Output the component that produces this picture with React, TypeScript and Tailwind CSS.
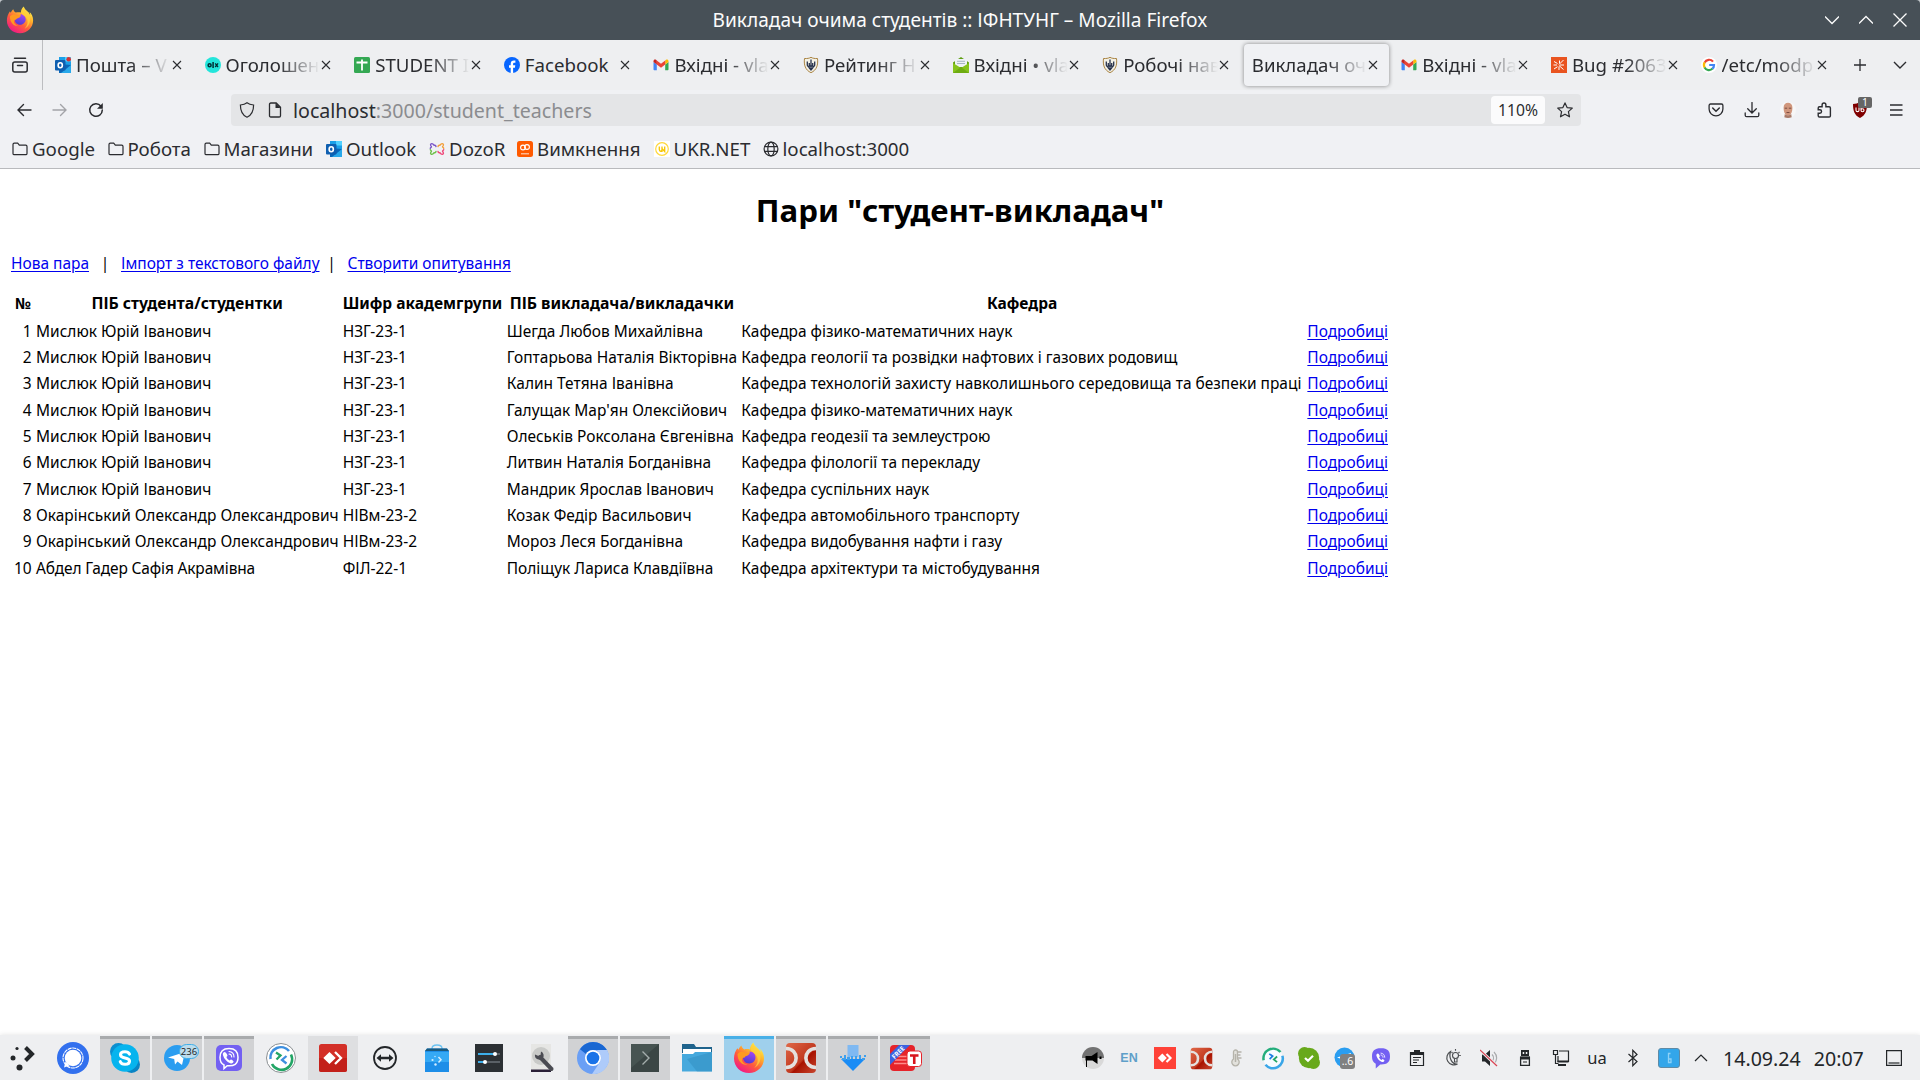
import React from "react";

type Kids = { children: React.ReactNode };

function Svg({ s = 16, vb = 16, c = "", children }: { s?: number; vb?: number; c?: string } & Kids) {
  return (
    <svg width={s} height={s} viewBox={`0 0 ${vb} ${vb}`} fill="none" className={`shrink-0 ${c}`}>
      {children}
    </svg>
  );
}

/* ---------- shared logos ---------- */

function Firefox({ s = 32 }: { s?: number }) {
  return (
    <Svg s={s} vb={32}>
      <defs>
        <linearGradient id="ffa" x1="26" y1="3" x2="7" y2="30" gradientUnits="userSpaceOnUse">
          <stop offset="0" stopColor="#fff44f" />
          <stop offset=".3" stopColor="#ffb22b" />
          <stop offset=".6" stopColor="#ff5c3c" />
          <stop offset="1" stopColor="#f0148c" />
        </linearGradient>
        <linearGradient id="ffb" x1="18" y1="9" x2="14" y2="22" gradientUnits="userSpaceOnUse">
          <stop offset="0" stopColor="#a646f5" />
          <stop offset="1" stopColor="#4a3ccf" />
        </linearGradient>
      </defs>
      <path fill="url(#ffa)" d="M20.300.500c-2 1.800-3.300 4.300-3.300 7-2-.6-4-.5-5.800 0C9.500 6.500 8.600 5 8.400 3.600 6.900 4.700 6 6.200 5.600 7.700L4.300 6.300C2.400 9 1 12.500 1 16.500 1 25 7.700 31 16 31s15-6.300 15-14.800c0-4-1.700-7.400-4.100-9.400.5 1.300.7 2.300.7 3.400C26.200 5.800 21.500 5 20.300.500z" />
      <path fill="url(#ffb)" d="M16.500 9.500c4 0 6 3 6 6s-2.700 6-6.200 6c-3.800 0-6.300-2.800-6.300-6 0-1 .3-2.500 1-3.300 1.500-.2 4-.2 5.500-1.200.5-.5.300-.9 0-1.500z" />
      <path fill="#ff9a20" d="M4.500 12c2.500-3 6-2.500 7.500-1.300 2 .4 3.300.1 4.800.3-.4 1.600-2 2.500-4.200 3.200-1 .5-.7 2-2.600 1.500-2.500 2.700.5 6.500 4.500 6.800-5 1.200-10-3-10-10.500z" />
      <path fill="#ffd23c" opacity=".75" d="M20.300 1.500c.5 4 6 5 7 11.500 1 6-2 11-6 13 2.500-3 4.200-6 3-10.500C23 11.500 18 10 17.500 7.300c0-2.300 1-4.300 2.800-5.800z" />
    </Svg>
  );
}

function Outlook({ dot = false }: { dot?: boolean }) {
  return (
    <Svg>
      <path fill="#1a9fe8" d="M4 0h12v8H4z" />
      <path fill="#50d0ff" d="M10 0h6v4.500h-6z" />
      <path fill="#0a66b8" d="M4 7l12 1v8H4z" />
      <path fill="#28a8ea" d="M16 8v8H6z" />
      <rect y="3" width="10.500" height="10.500" rx="1" fill="#0f5fb0" />
      <ellipse cx="5.250" cy="8.200" rx="2.100" ry="2.500" stroke="#fff" strokeWidth="1.600" />
      {dot && <circle cx="13.700" cy="2.300" r="2.300" fill="#d13438" />}
    </Svg>
  );
}

const Olx = () => (
  <Svg>
    <circle cx="8" cy="8" r="8" fill="#23e5db" />
    <circle cx="4.600" cy="8.200" r="1.500" stroke="#002f34" strokeWidth="1.500" />
    <path d="M8.100 5v6" stroke="#002f34" strokeWidth="1.500" />
    <path d="M10.200 6.400l2.800 3.600M13 6.400l-2.800 3.600" stroke="#002f34" strokeWidth="1.300" />
  </Svg>
);

const Sheets = () => (
  <Svg>
    <rect width="16" height="16" rx="1.500" fill="#34a853" />
    <path d="M2.500 5.500h11M8 2.500v11" stroke="#fff" strokeWidth="1.800" />
  </Svg>
);

const Facebook = () => (
  <Svg>
    <circle cx="8" cy="8" r="8" fill="#0866ff" />
    <path fill="#fff" d="M6.700 16v-5.300H5V8.300h1.700V7c0-2.500 1.100-3.600 3.300-3.600.5 0 1.100.1 1.400.2v2.100h-.9c-1 0-1.400.4-1.400 1.400v1.200h2.200l-.4 2.400H9.100V16z" />
  </Svg>
);

const Gmail = () => (
  <Svg>
    <path fill="#4285f4" d="M.5 5v7.300c0 .6.500 1 1 1h2.300V7.500z" />
    <path fill="#34a853" d="M12.200 13.300h2.300c.6 0 1-.4 1-1V5l-3.300 2.500z" />
    <path fill="#fbbc04" d="M12.200 3.500v4l3.300-2.500V4c0-1.300-1.500-2-2.500-1.200z" />
    <path fill="#ea4335" d="M3.800 7.500v-4L8 6.700l4.200-3.200v4L8 10.700z" />
    <path fill="#c5221f" d="M.5 4v1l3.300 2.500v-4L3 2.800C2 2 .5 2.700.5 4z" />
  </Svg>
);

const Crest = () => (
  <Svg>
    <path d="M1.500 1.500c2.500.2 5-.2 6.500-1.200 1.500 1 4 1.400 6.500 1.200.8 6.500-.8 11.500-6.500 14.200C2.300 13 .7 8 1.500 1.500z" fill="#f3f1e6" stroke="#a98342" />
    <path d="M4.300 4.500v3.500c0 1.500 1.500 1.500 2 3L8 13l1.700-2c.5-1.500 2-1.500 2-3V4.500M8 2.500V12M6.300 6v3h3.400V6" stroke="#27324c" strokeWidth="1.300" />
  </Svg>
);

const GreenMail = () => (
  <Svg>
    <path fill="#5f9e10" d="M0 5.500L8 0l8 5.500V15a1 1 0 0 1-1 1H1a1 1 0 0 1-1-1z" />
    <path fill="#eef2f6" d="M2 2h12v8H2z" />
    <path d="M4 4.300h8M4 6.500h8" stroke="#a9b6c4" />
    <path fill="#86c31c" d="M0 6l8 5 8-5v9a1 1 0 0 1-1 1H1a1 1 0 0 1-1-1z" />
    <path fill="#6eac12" d="M0 16l8-6 8 6z" />
  </Svg>
);

const Bug = () => (
  <Svg>
    <path fill="#e95420" d="M0 0h16v16H0z" />
    <path d="M3 4.500l3.500 2M2.500 8h3.500M3 12l3.500-2.300M12.500 3L8 7.500M8.500 3.500v3M8 8.500l4.500 4M8 9.500v3.500M9 8h4" stroke="#fff" strokeWidth="1" />
  </Svg>
);

const GoogleG = () => (
  <Svg>
    <circle cx="8" cy="8" r="8" fill="#fff" />
    <path d="M12 4.600A5 5 0 0 0 3.600 5.600" stroke="#ea4335" strokeWidth="2.200" />
    <path d="M3.700 5.400a5 5 0 0 0 0 5.200" stroke="#fbbc04" strokeWidth="2.200" />
    <path d="M3.600 10.400a5 5 0 0 0 8 1.200" stroke="#34a853" strokeWidth="2.200" />
    <path d="M11.400 11.800A5 5 0 0 0 13 8H8.200" stroke="#4285f4" strokeWidth="2.200" />
  </Svg>
);

const Folder = () => (
  <Svg>
    <path d="M1 3.500c0-.8.500-1.300 1.300-1.300h3.400l1.600 1.900h6.400c.8 0 1.300.5 1.300 1.300v7c0 .8-.5 1.300-1.300 1.300H2.300c-.8 0-1.300-.5-1.300-1.300z" stroke="#2b2c30" strokeWidth="1.200" />
  </Svg>
);

const Dozor = () => (
  <Svg>
    <g strokeWidth="1.400" strokeLinecap="round">
      <path d="M7 5.500C6.500 3 5 5.300 4.500 3.500 2.500 1.800 1 3 1.800 4.700 3.500 6 1.500 6.500 1.300 7.300" stroke="#7b57c8" />
      <path d="M9 5.500c.5-2.500 2-.2 2.500-2 2-1.700 3.500-.5 2.700 1.200-1.700 1.300.3 1.800.5 2.600" stroke="#f2a03d" />
      <path d="M7 10.500c-.5 2.500-2 .2-2.500 2-2 1.700-3.500.5-2.700-1.200C3.500 10 1.500 9.500 1.300 8.700" stroke="#6fc04a" />
      <path d="M9 10.500c.5 2.500 2 .2 2.500 2 2 1.700 3.500.5 2.700-1.200-1.700-1.300.3-1.800.5-2.600" stroke="#ef4a7b" />
    </g>
  </Svg>
);

const Orange = () => (
  <Svg>
    <rect width="16" height="16" rx="2.500" fill="#ff5a00" />
    <circle cx="6" cy="6.500" r="2.400" stroke="#fff" strokeWidth="1.100" />
    <circle cx="10" cy="6" r="2.400" stroke="#fff" strokeWidth="1.100" />
    <path d="M4 12.800h8" stroke="#ffd9c2" strokeWidth="1.100" />
  </Svg>
);

const UkrNet = () => (
  <Svg>
    <path fill="#fff" d="M0 0h16v16H0z" />
    <circle cx="8" cy="8" r="6.300" stroke="#ffd83b" strokeWidth="1.200" />
    <path d="M5.300 5.500v3c0 2.300 2.700 2.300 2.700 0v-3M8 11V7.500l2.700 3V5.500" stroke="#f7c600" strokeWidth="1.300" />
  </Svg>
);

const Globe = () => (
  <Svg>
    <g stroke="#2b2c30" strokeWidth="1.200">
      <circle cx="8" cy="8" r="6.900" />
      <ellipse cx="8" cy="8" rx="3.200" ry="6.900" />
      <path d="M1.500 5.700h13M1.500 10.300h13" />
    </g>
  </Svg>
);

/* ---------- browser chrome ---------- */

const CloseX = () => (
  <Svg s={10} vb={10}>
    <path d="M1 1l8 8M9 1L1 9" stroke="#2b2c30" strokeWidth="1.100" />
  </Svg>
);

const tabs: { icon?: React.ReactNode; t: string; active?: boolean; fits?: boolean }[] = [
  { icon: <Outlook dot />, t: "Пошта – V" },
  { icon: <Olx />, t: "Оголошен" },
  { icon: <Sheets />, t: "STUDENT I" },
  { icon: <Facebook />, t: "Facebook", fits: true },
  { icon: <Gmail />, t: "Вхідні - vla" },
  { icon: <Crest />, t: "Рейтинг Н" },
  { icon: <GreenMail />, t: "Вхідні • vla" },
  { icon: <Crest />, t: "Робочі нав" },
  { t: "Викладач оч", active: true },
  { icon: <Gmail />, t: "Вхідні - vla" },
  { icon: <Bug />, t: "Bug #2063" },
  { icon: <GoogleG />, t: "/etc/modp" },
];

function TabStrip() {
  return (
    <div className="flex h-[50px] bg-[#eeeff1] text-[#2b2c30]">
      <div className="flex w-[43px] items-center border-r border-[#bcbdc0] pl-3">
        <Svg>
          <rect x=".8" y="5" width="14.400" height="10" rx="2" stroke="#2b2c30" strokeWidth="1.500" />
          <path d="M2.500 1.200h11" stroke="#2b2c30" strokeWidth="1.500" strokeLinecap="round" />
          <path d="M5.500 8.500h5" stroke="#2b2c30" strokeWidth="1.500" strokeLinecap="round" />
        </Svg>
      </div>
      <div className="flex pl-[2px]">
        {tabs.map((tab, i) => (
          <div key={i} className="flex w-[149.600px] px-[2px] py-1">
            <div
              className={
                tab.active
                  ? "flex h-[42px] flex-1 min-w-0 items-center rounded bg-[#f0f1f4] pr-[11px] pl-2 shadow-[0_0_4px_rgba(0,0,0,0.45)]"
                  : "flex h-[42px] flex-1 min-w-0 items-center pr-[11px] pl-2"
              }
            >
              {tab.icon && <span className="mr-[5px]">{tab.icon}</span>}
              <span
                className={
                  tab.fits
                    ? "min-w-0 flex-1 overflow-hidden text-[18.670px] leading-7 whitespace-nowrap"
                    : "min-w-0 flex-1 overflow-hidden text-[18.670px] leading-7 whitespace-nowrap [mask-image:linear-gradient(to_left,transparent_1px,black_42px)]"
                }
              >
                {tab.t}
              </span>
              <CloseX />
            </div>
          </div>
        ))}
      </div>
      <div className="flex flex-1 items-center justify-between pr-[13px] pl-[13px]">
        <Svg s={14} vb={14}>
          <path d="M7 1v12M1 7h12" stroke="#2b2c30" strokeWidth="1.300" />
        </Svg>
        <Svg s={14} vb={14}>
          <path d="M1 4l6 6 6-6" stroke="#2b2c30" strokeWidth="1.400" />
        </Svg>
      </div>
    </div>
  );
}

function NavBar() {
  return (
    <div className="flex h-10 items-center text-[#2b2c30]">
      <div className="flex w-[231px] gap-5 pl-4">
        <Svg>
          <path d="M15 8H2M7.500 2.500L2 8l5.500 5.500" stroke="#2b2c30" strokeWidth="1.400" strokeLinecap="round" />
        </Svg>
        <Svg>
          <path d="M1 8h13M8.500 2.500L14 8l-5.500 5.500" stroke="#a3a4a8" strokeWidth="1.400" strokeLinecap="round" />
        </Svg>
        <Svg>
          <path d="M13 4.200A6.300 6.300 0 1 0 14.300 8" stroke="#2b2c30" strokeWidth="1.500" strokeLinecap="round" />
          <path d="M14.800 1v5.700H9z" fill="#2b2c30" />
        </Svg>
      </div>
      <div className="flex h-8 w-[1350px] items-center rounded bg-[#e4e5e7] pl-2">
        <Svg>
          <path d="M8 .8c1.500 1.200 4 2 6.600 2.200 0 5.500-1.400 10-6.600 12.200C2.800 13 1.400 8.500 1.400 3 4 2.800 6.500 2 8 .8z" stroke="#2b2c30" strokeWidth="1.200" />
        </Svg>
        <span className="ml-3">
          <Svg>
            <path d="M2.500 2.300c0-.8.500-1.300 1.300-1.300h5.400L13.500 5.300v8.400c0 .8-.5 1.300-1.300 1.300H3.800c-.8 0-1.300-.5-1.300-1.300z" stroke="#2b2c30" strokeWidth="1.300" />
            <path d="M8.500 1v5h5z" fill="#2b2c30" />
          </Svg>
        </span>
        <span className="ml-[10px] flex-1 pt-[2px] text-[19.600px] text-[#8b8c8f]">
          <span className="text-[#2b2c30]">localhost</span>:3000/student_teachers
        </span>
        <span className="flex h-7 w-[54px] items-center justify-center rounded bg-[#fbfbfc] pt-[2px] text-[15.700px]">110%</span>
        <span className="mr-2 ml-3">
          <Svg>
            <path d="M8 .9l2.100 4.700 5.200.5-3.900 3.500 1.100 5.200L8 12.200l-4.500 2.600 1.100-5.200L.7 6.100l5.200-.5z" stroke="#2b2c30" strokeWidth="1.200" strokeLinejoin="round" />
          </Svg>
        </span>
      </div>
      <div className="flex flex-1 items-center justify-end gap-5 pr-4">
        <Svg>
          <path d="M2.500 2h11c.8 0 1.400.5 1.400 1.400V7A6.900 6.900 0 0 1 1.100 7V3.400C1.100 2.500 1.700 2 2.500 2z" stroke="#2b2c30" strokeWidth="1.300" />
          <path d="M4.700 6L8 9.200 11.300 6" stroke="#2b2c30" strokeWidth="1.500" strokeLinecap="round" />
        </Svg>
        <Svg>
          <path d="M8 .5V11M3.700 6.800L8 11l4.300-4.200M1.200 11v2.200c0 1 .6 1.500 1.500 1.500h10.600c.9 0 1.500-.5 1.500-1.500V11" stroke="#2b2c30" strokeWidth="1.300" strokeLinecap="round" />
        </Svg>
        <Svg>
          <ellipse cx="8" cy="8" rx="8" ry="8" fill="#f7f7f7" />
          <path d="M3.600 5.500C3.600 2.500 5.500.8 8 .8s4.400 1.700 4.400 4.700c0 4-1.200 8-4.400 8s-4.400-4-4.400-8z" fill="#d0967c" />
          <path d="M4.800 12c1.500 1.800 4.900 1.800 6.400 0l.5 3.200c-2 1-5.400 1-7.400 0z" fill="#a87a68" />
          <path d="M4.700 6.200h2.500M8.800 6.200h2.500M6.500 10.500h3" stroke="#7c4d40" strokeWidth="1" />
        </Svg>
        <Svg>
          <path d="M3.500 15c-.8 0-1.300-.5-1.300-1.300v-2.500h1.600a1.700 1.700 0 0 0 0-3.500H2.200V5.900c0-.8.500-1.200 1.300-1.200h2.600V2.900a1.900 1.900 0 0 1 3.800 0v1.800h3.200c.8 0 1.300.5 1.300 1.300v8c0 .7-.5 1-1.300 1z" stroke="#2b2c30" strokeWidth="1.400" />
        </Svg>
        <div className="relative">
          <Svg>
            <path d="M8 0c2 1.200 4.500 2 7 2 0 6-1 11-7 14C2 13 1 8 1 2c2.500 0 5-.8 7-2z" fill="#800000" />
            <path d="M4 5.500v2.700c0 1.900 3 1.900 3 0V5.500M9 5v3.500M9 8.300a1.500 1.500 0 1 0 3 0 1.500 1.500 0 1 0-3 0" stroke="#fff" strokeWidth="1.100" />
          </Svg>
          <span className="absolute -top-[5px] left-[6px] flex h-[11px] w-[14px] items-center justify-center rounded-[2px] bg-[#666] text-[10.500px] leading-none text-white">1</span>
        </div>
        <Svg>
          <path d="M2 3h12.500M2 8h12.500M2 13h12.500" stroke="#2b2c30" strokeWidth="1.300" />
        </Svg>
      </div>
    </div>
  );
}

function Bookmark({ icon, w, children }: { icon: React.ReactNode; w: string } & Kids) {
  return (
    <div className={`flex shrink-0 items-center gap-1 whitespace-nowrap ${w}`}>
      {icon}
      <span>{children}</span>
    </div>
  );
}

function Bookmarks() {
  return (
    <div className="flex h-[38px] items-center pl-3 text-[18.700px] leading-7 text-[#2b2c30]">
      <Bookmark icon={<Folder />} w="w-[95.500px]">Google</Bookmark>
      <Bookmark icon={<Folder />} w="w-[96px]">Робота</Bookmark>
      <Bookmark icon={<Folder />} w="w-[122.500px]">Магазини</Bookmark>
      <Bookmark icon={<Outlook />} w="w-[103px]">Outlook</Bookmark>
      <Bookmark icon={<Dozor />} w="w-[88px]">DozoR</Bookmark>
      <Bookmark icon={<Orange />} w="w-[136.500px]">Вимкнення</Bookmark>
      <Bookmark icon={<UkrNet />} w="w-[109px]">UKR.NET</Bookmark>
      <Bookmark icon={<Globe />} w="w-[160px]">localhost:3000</Bookmark>
    </div>
  );
}

/* ---------- page ---------- */

const m = "Мислюк Юрій Іванович";
const o = "Окарінський Олександр Олександрович";
const rows = [
  [m, "НЗГ-23-1", "Шегда Любов Михайлівна", "Кафедра фізико-математичних наук"],
  [m, "НЗГ-23-1", "Гоптарьова Наталія Вікторівна", "Кафедра геології та розвідки нафтових і газових родовищ"],
  [m, "НЗГ-23-1", "Калин Тетяна Іванівна", "Кафедра технологій захисту навколишнього середовища та безпеки праці"],
  [m, "НЗГ-23-1", "Галущак Мар'ян Олексійович", "Кафедра фізико-математичних наук"],
  [m, "НЗГ-23-1", "Олеськів Роксолана Євгенівна", "Кафедра геодезії та землеустрою"],
  [m, "НЗГ-23-1", "Литвин Наталія Богданівна", "Кафедра філології та перекладу"],
  [m, "НЗГ-23-1", "Мандрик Ярослав Іванович", "Кафедра суспільних наук"],
  [o, "НІВм-23-2", "Козак Федір Васильович", "Кафедра автомобільного транспорту"],
  [o, "НІВм-23-2", "Мороз Леся Богданівна", "Кафедра видобування нафти і газу"],
  ["Абдел Гадер Сафія Акрамівна", "ФІЛ-22-1", "Поліщук Лариса Клавдіївна", "Кафедра архітектури та містобудування"],
];

const link = "text-[#0000ee] underline decoration-1 underline-offset-2";

function Page() {
  return (
    <main className="flex-1 bg-white px-[11px] text-[15.480px] leading-[22px] text-black">
      <h1 className="mt-5 text-center text-[31.200px] leading-[42px] font-bold">Пари "студент-викладач"</h1>
      <nav className="mt-[21px] flex whitespace-pre">
        <a className={link}>Нова пара</a>
        <span className="w-8 text-center">|</span>
        <a className={link}>Імпорт з текстового файлу</a>
        <span className="w-7 pr-1 text-center">|</span>
        <a className={link}>Створити опитування</a>
      </nav>
      <div className="mt-4 grid grid-cols-[21.800px_306.600px_164.100px_234.500px_566.100px_85px] pl-[2.200px] whitespace-nowrap">
        {["№", "ПІБ студента/студентки", "Шифр академгрупи", "ПІБ викладача/викладачки", "Кафедра", ""].map((h, i) => (
          <div
            key={i}
            className={
              i === 1 || i === 3
                ? "flex h-[27.500px] items-center justify-center pr-[3.300px] pb-[2px] pl-[1.100px] text-[15.750px] font-bold"
                : "flex h-[27.500px] items-center justify-center pr-[3.300px] pb-[2px] pl-[1.100px] text-[15.550px] font-bold"
            }
          >
            {h}
          </div>
        ))}
        {rows.map((r, i) => (
          <React.Fragment key={i}>
            <div className="flex h-[26.330px] items-center justify-end pr-[3.300px]">{i + 1}</div>
            {r.map((c, j) => (
              <div
                key={j}
                className={
                  i === 9 && j === 0
                    ? "flex h-[26.330px] items-center pl-[1.100px] tracking-[-0.140px]"
                    : "flex h-[26.330px] items-center pl-[1.100px]"
                }
              >
                {c}
              </div>
            ))}
            <div className="flex h-[26.330px] items-center pl-[1.100px]">
              <a className={link}>Подробиці</a>
            </div>
          </React.Fragment>
        ))}
      </div>
    </main>
  );
}

/* ---------- desktop panel ---------- */

const RemoteArrows = ({ a = "#1a7ee0", b = "#23a566" }: { a?: string; b?: string }) => (
  <>
    <path d="M11 10.500l4.500 3-4 4" stroke={a} strokeWidth="2.300" />
    <path d="M21.500 14l-4.500 4 4.500 3.500" stroke={b} strokeWidth="2.300" />
  </>
);

const ViberPhone = () => (
  <>
    <path d="M11.500 10c-1.500.7-2 1.800-1.500 3.300 1.200 3.800 3.700 6.500 7.300 8 1.500.5 2.500 0 3.300-1.500.3-.8-2-2.500-2.800-2.300l-1.200 1c-1.600-.7-2.700-2-3.200-3.500l1-1c.4-1-1.700-4.200-2.900-4z" fill="currentColor" />
    <path d="M16 9.500c3 .3 5 2.500 5 5.500M16 12c1.700.2 2.700 1.300 2.700 3" stroke="currentColor" strokeWidth="1.100" strokeLinecap="round" />
  </>
);

const DcArcs = () => (
  <>
    <defs>
      <linearGradient id="dcg" x1="0" y1="0" x2="1" y2="1">
        <stop offset="0" stopColor="#e06848" />
        <stop offset=".55" stopColor="#c23a20" />
        <stop offset=".6" stopColor="#a81200" />
        <stop offset="1" stopColor="#c84830" />
      </linearGradient>
    </defs>
    <rect x="1" y="1" width="30" height="30" rx="4" fill="url(#dcg)" />
    <path d="M1 6.500c13.500 0 13.500 19 0 19M31 6.500c-13.500 0-13.500 19 0 19" stroke="#e4e0de" strokeWidth="3.600" />
  </>
);

type Slot = { k: "none" | "open" | "hover" | "active"; i: React.ReactNode };

const tasks: Slot[] = [
  {
    k: "none",
    i: (
      <Svg s={32} vb={32}>
        <circle cx="16" cy="16" r="16" fill="#3270ee" />
        <circle cx="16" cy="16" r="10" stroke="#fff" strokeWidth="1.100" strokeDasharray="4 .6" />
        <circle cx="16" cy="16" r="8.300" fill="#fff" />
        <path d="M7 25.500l1.500-6 4 4z" fill="#fff" />
      </Svg>
    ),
  },
  {
    k: "open",
    i: (
      <Svg s={32} vb={32}>
        <circle cx="9.500" cy="9.500" r="8.500" fill="#0a8fd0" />
        <circle cx="22.500" cy="22.500" r="8.500" fill="#0a84c4" />
        <circle cx="16" cy="16" r="13.800" fill="#06b4ee" />
        <path d="M20.500 12c-1-1.700-2.700-2.200-4.500-2.200-2.800 0-4.500 1.200-4.500 3 0 4.500 9 2 9 6.200 0 2.100-2 3.300-4.500 3.300-2.200 0-4-.8-4.700-2.600" stroke="#fff" strokeWidth="3.100" strokeLinecap="round" />
      </Svg>
    ),
  },
  {
    k: "open",
    i: (
      <div className="relative">
        <Svg s={28} vb={28}>
          <circle cx="14" cy="14" r="13" fill="#2a9df0" />
          <path d="M5 13.500L22 8l-3 13-4.500-3.500-2.500 3-.8-5.500z" fill="#fff" />
        </Svg>
        <span className="absolute top-0 left-[16px] flex h-[15px] w-[20px] items-center justify-center rounded-full border border-[#3daee9] bg-[#bcdcec] text-[9.500px] leading-none text-[#232629]">236</span>
      </div>
    ),
  },
  {
    k: "open",
    i: (
      <Svg s={32} vb={32}>
        <rect x="3" y="3" width="26" height="26" rx="5" fill="#7360f2" />
        <path d="M16 6.500c-6.500 0-9 2.700-9 8.800 0 4 1.300 6.500 4 7.700v3.500l3.200-2.800c7 .5 10.800-1.500 10.800-8.400 0-6.100-2.500-8.800-9-8.800z" stroke="#fff" strokeWidth="1.500" />
        <g className="text-white"><ViberPhone /></g>
      </Svg>
    ),
  },
  {
    k: "none",
    i: (
      <Svg s={32} vb={32}>
        <circle cx="16" cy="16" r="14.500" fill="#fff" stroke="#8a8f92" strokeWidth="1" />
        <path d="M5.500 17A10.500 10.500 0 0 1 24 9" stroke="#3d8fdf" strokeWidth="2.600" />
        <path d="M26 12.500A10.500 10.500 0 0 1 7 22" stroke="#23a566" strokeWidth="2.600" />
        <RemoteArrows b="#3d8fdf" a="#23a566" />
      </Svg>
    ),
  },
  {
    k: "hover",
    i: (
      <Svg s={32} vb={32}>
        <rect x="2" y="2" width="28" height="28" rx="2.500" fill="#d32f27" />
        <path d="M2 16h28v11.500a2.500 2.500 0 0 1-2.500 2.500h-23A2.500 2.500 0 0 1 2 27.500z" fill="#c3201a" />
        <path d="M12.500 10l6.200 6-6.200 6-6.200-6z" fill="#fff" />
        <path d="M18 10l6 6-6 6" stroke="#fff" strokeWidth="2.300" />
      </Svg>
    ),
  },
  {
    k: "none",
    i: (
      <Svg s={26} vb={26}>
        <circle cx="13" cy="13" r="11" stroke="#232629" strokeWidth="1.800" />
        <path d="M4.500 13l4.500-3.800v2.500h8V9.200l4.500 3.800-4.500 3.800v-2.500H9v2.500z" fill="#232629" />
      </Svg>
    ),
  },
  {
    k: "none",
    i: (
      <Svg s={28} vb={28}>
        <path d="M9 7V4.500C9 2 10.500 1 14 1s5 1 5 3.500V7" stroke="#6cc3f2" strokeWidth="1.300" />
        <path d="M4 4.500h20L26 7v21H2V7z" fill="#1d8ee8" />
        <path d="M4 4.500h20L26 7H2z" fill="#1b5a7e" />
        <path d="M2 8h24v10H2z" fill="#35a9f4" />
        <circle cx="9.500" cy="16" r="1.100" fill="#d5eeff" />
        <circle cx="12" cy="12.500" r=".7" fill="#d5eeff" />
        <circle cx="12.500" cy="20.500" r="1.200" fill="#d5eeff" />
        <path d="M15.500 13l2.500 2.700-2.500 2.700" stroke="#d5eeff" strokeWidth="1.500" />
      </Svg>
    ),
  },
  {
    k: "none",
    i: (
      <Svg s={32} vb={32}>
        <path d="M2 2h28v28H2z" fill="#2c3034" />
        <path d="M5 12h22M5 20h22" stroke="#5a6066" strokeWidth="2" />
        <path d="M5 12h17M5 20h7" stroke="#3daee9" strokeWidth="2" />
        <circle cx="22" cy="12" r="2" fill="#fff" />
        <circle cx="12" cy="20" r="2" fill="#fff" />
      </Svg>
    ),
  },
  {
    k: "none",
    i: (
      <Svg s={32} vb={32}>
        <path d="M6 2h20v27H6z" fill="#e6e6e4" />
        <path d="M6 27.500h20V30H6z" fill="#2b2038" />
        <circle cx="16" cy="14" r="9" fill="#c9cac8" />
        <path d="M15 15l11.500 12" stroke="#4a4b52" strokeWidth="4" strokeLinecap="round" />
        <path d="M10 12.500a4.500 4.500 0 0 0 8 3.500 4.500 4.500 0 0 0-2-6.500l-.5 3.500-2 1z" fill="#4a4b52" />
      </Svg>
    ),
  },
  {
    k: "open",
    i: (
      <Svg s={32} vb={32}>
        <circle cx="16" cy="16" r="16" fill="#6a9ff5" />
        <path d="M16 0c6 0 11 3 13.900 8H16a8 8 0 0 0-7 4L3 7.200C6 3 10.500 0 16 0z" fill="#1967d2" />
        <path d="M30 8a16 16 0 0 1-15 24l8-12a8 8 0 0 0-2-10.300L20 8z" fill="#aecbfa" />
        <circle cx="16" cy="16" r="8" fill="#fff" />
        <circle cx="16" cy="16" r="6.300" fill="#1a73e8" />
      </Svg>
    ),
  },
  {
    k: "open",
    i: (
      <Svg s={32} vb={32}>
        <path d="M2 2h28v28H2z" fill="#3b4645" />
        <path d="M2 2h28L2 26z" fill="#475452" />
        <path d="M13.500 9.500l6.500 6.500-6.500 6.500" stroke="#a4adac" strokeWidth="1.400" />
      </Svg>
    ),
  },
  {
    k: "none",
    i: (
      <Svg s={32} vb={32}>
        <path d="M1 2h12l2 3h16v6H1z" fill="#1f638c" />
        <path d="M2 7h28v6H2z" fill="#fff" />
        <path d="M1 12h11l2-2h17v19.500H1z" fill="#46a9dd" />
        <path d="M31 10v19.500H16L6 17z" fill="#2f8dbf" opacity=".5" />
      </Svg>
    ),
  },
  { k: "active", i: <Firefox s={32} /> },
  { k: "open", i: <Svg s={32} vb={32}><DcArcs /></Svg> },
  {
    k: "open",
    i: (
      <Svg s={32} vb={32}>
        <path d="M10.500 3h11v12h-11z" fill="#7fb9f2" />
        <path d="M4 17h24L16 29z" fill="#1a8cf5" />
        <path d="M3 14h2v2H3zM7 13h2v3H7zM5 16h4v2H5zM10 15h3v3h-3zM14 14h2v3h-2zM18 14h2v3h-2zM22 13h2v4h-2zM25 16h3v2h-3zM27 13h2v2h-2z" fill="#3da0ee" />
      </Svg>
    ),
  },
  {
    k: "open",
    i: (
      <Svg s={34} vb={34}>
        <rect x="2" y="4" width="25" height="26" rx="4" fill="#e6232a" />
        <path d="M9 15.500h13M7 19h15M6 22.500h16" stroke="#ff8a8a" strokeWidth="1.500" />
        <path d="M2 24V13L11 4h11z" fill="#3b63e0" />
        <text x="6.500" y="18.500" transform="rotate(-45 6.500 18.500)" fontSize="6.500" fontWeight="700" fill="#fff">FREE</text>
        <rect x="19" y="10" width="14.500" height="15.500" rx="3" fill="#fff" stroke="#e6232a" strokeWidth="1" />
        <path d="M22 14.500h8.500M26.250 14.500v8.500" stroke="#d8141c" strokeWidth="2.600" />
      </Svg>
    ),
  },
];

const slotClass = {
  none: "border-transparent",
  open: "border-[#a9abad] bg-[#d1d2d4]",
  hover: "border-transparent bg-[#dedfe1]",
  active: "border-[#49b0e7] bg-[#9fd0ec]",
};

const tray: React.ReactNode[] = [
  <Svg s={22} vb={22}>
    <circle cx="11" cy="11" r="11" fill="#d9d9d9" />
    <path d="M0 11a11 11 0 0 1 22 0z" fill="#727272" />
    <path d="M3.500 9h6l6-4v12l-5-3.500H5V20H4v-6.500h-.5zM17.500 9.500h2v2.500h-2z" fill="#000" />
  </Svg>,
  <span className="font-['Liberation_Sans'] text-[12.500px] font-bold text-[#5f9fc9]">EN</span>,
  <Svg s={22} vb={22}>
    <path d="M0 0h22v22H0z" fill="#ff4238" />
    <path d="M8.300 6.500l4.500 4.500-4.500 4.500L3.800 11z" fill="#fff" />
    <path d="M12.500 7L16.500 11l-4 4" stroke="#fff" strokeWidth="2.200" />
  </Svg>,
  <Svg s={23} vb={32}><DcArcs /></Svg>,
  <Svg s={18} vb={18}>
    <path d="M5.500 3a2 2 0 0 1 4 0v7a3.700 3.700 0 1 1-4 0z" fill="#e2e1dc" stroke="#b5b3aa" strokeWidth="1.300" />
    <path d="M7.500 5v8M9.500 3h4M9.500 6h3M9.500 9h4" stroke="#b5b3aa" strokeWidth="1.500" />
  </Svg>,
  <Svg s={24} vb={32}>
    <circle cx="16" cy="16" r="13" fill="#f6fbff" />
    <path d="M3.500 19A13 13 0 0 1 26 8" stroke="#23ad7b" strokeWidth="3.400" />
    <path d="M28.500 13A13 13 0 0 1 6 25" stroke="#3aa6e8" strokeWidth="3.400" />
    <RemoteArrows />
  </Svg>,
  <Svg s={24} vb={24}>
    <circle cx="7.500" cy="7.500" r="6.500" fill="#68a91b" />
    <circle cx="16.500" cy="16.500" r="6.500" fill="#68a91b" />
    <circle cx="12" cy="12" r="10.200" fill="#68a91b" />
    <path d="M8 12l3 2.800 5-5" stroke="#fff" strokeWidth="2.200" />
  </Svg>,
  <div className="relative">
    <Svg s={22} vb={22}>
      <circle cx="10.500" cy="10.500" r="10" fill="#2a9df0" />
      <path d="M3 10.500L17 6l-2 9-6-2.500z" fill="#fff" />
    </Svg>
    <span className="absolute top-[7px] left-[6px] flex h-[15px] w-[15px] items-center justify-center rounded-[3px] bg-[#808080] text-[10.500px] leading-none text-white">..6</span>
  </div>,
  <Svg s={24} vb={32}>
    <path d="M16 3C7 3 4 6.500 4 14c0 5 1.500 8 5 9.500V30l6-5.500c9 .3 13-2.500 13-10.500 0-7.500-3-11-12-11z" fill="#7360f2" />
    <g className="text-white"><ViberPhone /></g>
  </Svg>,
  <Svg s={16}>
    <path d="M1.500 2.500h13v13h-13z" stroke="#232629" strokeWidth="1.200" />
    <path d="M1 2h14v3H1zM5 0h6v3H5z" fill="#232629" />
    <path d="M4 7.500h8M4 10h6M4 12.500h4" stroke="#232629" strokeWidth="1.100" />
  </Svg>,
  <Svg s={18} vb={18}>
    <path d="M6.500 2.500a7 7 0 1 0 7 12.500C8 15.500 4.500 9 6.500 2.500z" stroke="#4b4e51" strokeWidth="1.200" />
    <circle cx="11.500" cy="6.500" r="3" stroke="#4b4e51" strokeWidth="1.100" />
    <path d="M10.500 9.500v3.500h2.500V9.500M11.500 0v1.800M16.800 6.500h-1.600M7.500 3l1 1M15.500 3l-1 1" stroke="#4b4e51" strokeWidth="1.100" />
  </Svg>,
  <Svg s={18} vb={18}>
    <path d="M2 5.500h3l5-4.500v16l-5-4.500H2z" fill="#232629" />
    <path d="M12 5.500c2 2 2 5 0 7M14 3c3.500 3.500 3.500 8.500 0 12" stroke="#a8aaac" strokeWidth="1.200" />
    <path d="M0 1l17 16" stroke="#eeeff1" strokeWidth="3" />
    <path d="M0 1l17 16" stroke="#da4453" strokeWidth="1.200" />
  </Svg>,
  <Svg s={16}>
    <path d="M4 0h8v6H4z" fill="#232629" />
    <path d="M5.700 2h1.500v2H5.700zM8.800 2h1.500v2H8.800z" fill="#eeeff1" />
    <path d="M3.600 7.500h8.800v8H3.600z" stroke="#232629" strokeWidth="1.300" />
    <path d="M3 6.500h10v3H3zM6 11.500h4v1H6z" fill="#232629" />
  </Svg>,
  <Svg s={18} vb={18}>
    <path d="M1.500 1.500h4v4h-4zM3.500 5.500v9h3M7 2h9.500v10.500H6V7" stroke="#232629" strokeWidth="1.200" />
    <path d="M5.500 11.500h11v2h-11zM6 15h8v2H6z" fill="#232629" />
  </Svg>,
  <span className="pt-px text-[16.500px] text-[#232629]">ua</span>,
  <Svg s={18} vb={18}>
    <path d="M4.500 5l8.500 7.500-4.200 4.200V1.300L13 5.500 4.500 13" stroke="#232629" strokeWidth="1.200" />
  </Svg>,
  <div className="flex h-5 w-[22px] items-center justify-center rounded-[3px] border border-[#5f8ba6] bg-[#33a6ea]">
    <Svg s={12} vb={12}>
      <path d="M7.500 1.500h-2v9h2.500V7H5.500" stroke="#8ed2f7" strokeWidth="1.300" />
    </Svg>
  </div>,
];

function Panel() {
  return (
    <footer className="flex h-[45px] bg-[#eeeff1] pt-px shadow-[0_0_5px_rgba(0,0,0,0.12)]">
      <div className="flex w-[46px] items-center justify-center pr-[3px] pb-px">
        <Svg s={28} vb={28}>
          <circle cx="9" cy="4.500" r="1.600" fill="#232629" />
          <circle cx="5" cy="14" r="2.500" fill="#232629" />
          <circle cx="11.500" cy="23.500" r="3" fill="#232629" />
          <path d="M17.500 3.500l6.500 6.500-6.500 6.500" stroke="#232629" strokeWidth="4" />
        </Svg>
      </div>
      <div className="ml-0.5 flex gap-0.5">
        {tasks.map((t, i) => (
          <div key={i} className={`flex h-11 w-[50px] items-center justify-center border-t-[3px] pb-[3px] ${slotClass[t.k]}`}>
            {t.i}
          </div>
        ))}
      </div>
      <div className="ml-[145px] flex">
        {tray.map((t, i) => (
          <div key={i} className="flex h-11 w-9 items-center justify-center">{t}</div>
        ))}
      </div>
      <div className="flex flex-1 items-center text-[19.600px] text-[#232629]">
        <span className="ml-[7px]">
          <Svg s={14} vb={14}>
            <path d="M1 10l6-6 6 6" stroke="#232629" strokeWidth="1.200" />
          </Svg>
        </span>
        <span className="ml-[15px] pt-0.5">14.09.24</span>
        <span className="ml-[13px] pt-0.5">20:07</span>
        <span className="ml-[22px]">
          <Svg s={16}>
            <path d="M.6.600h14.800v14.800H.6z" stroke="#232629" strokeWidth="1.200" />
            <path d="M2.500 13h11" stroke="#232629" strokeWidth="1.200" />
          </Svg>
        </span>
      </div>
    </footer>
  );
}

export default function App() {
  return (
    <div className="flex h-[1080px] w-[1920px] flex-col overflow-hidden bg-[#f0f1f4] font-['Noto_Sans',sans-serif]">
      <div className="bg-[#c3c8cc]">
        <header className="flex h-10 items-center rounded-t-[4px] bg-[#475057] pr-[13px] pl-[6px] text-[#fcfcfc]">
          <div className="w-[120px]"><Firefox s={28} /></div>
          <div className="flex-1 pl-[7px] text-center text-[19.100px]">Викладач очима студентів :: ІФНТУНГ – Mozilla Firefox</div>
          <div className="flex w-[120px] justify-end gap-5">
            <Svg s={14} vb={14}><path d="M0 3.500l7 7 7-7" stroke="#fcfcfc" strokeWidth="1.300" /></Svg>
            <Svg s={14} vb={14}><path d="M0 10.500l7-7 7 7" stroke="#fcfcfc" strokeWidth="1.300" /></Svg>
            <Svg s={14} vb={14}><path d="M.5.500l13 13M13.500.500l-13 13" stroke="#fcfcfc" strokeWidth="1.300" /></Svg>
          </div>
        </header>
      </div>
      <TabStrip />
      <div className="h-[79px] border-b border-[#b9babd]">
        <NavBar />
        <Bookmarks />
      </div>
      <Page />
      <Panel />
    </div>
  );
}
